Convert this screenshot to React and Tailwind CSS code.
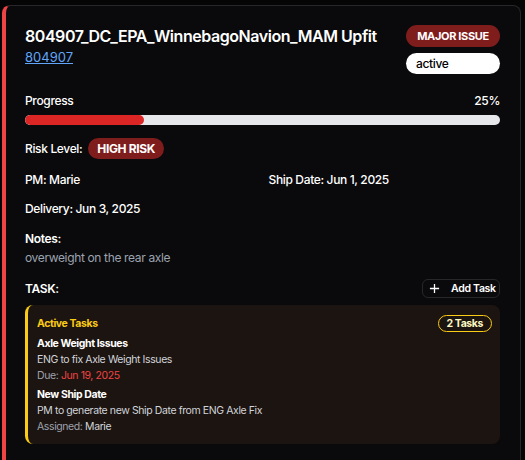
import React from "react";

export default function App() {
  return (
    <div className="min-h-[460px] bg-[#050505] pl-[2px] pt-[5px] overflow-hidden" style={{ fontFamily: "Inter, 'Noto Sans', sans-serif" }}>
      <div className="w-[519px] h-[470px] bg-[#0a0a0c] border border-[#27272a] border-l-4 border-l-[#ef4444] rounded-lg pl-[19px] pr-[20px] pt-[18px] tracking-[-0.35px]">
        <div className="flex justify-between items-start">
          <div className="flex flex-col">
            <div className="text-[16px] font-semibold text-white leading-[24px] tracking-[-0.45px] whitespace-nowrap">804907_DC_EPA_WinnebagoNavion_MAM Upfit</div>
            <a className="text-[13px] text-[#60a5fa] underline leading-[18px] tracking-[0px]">804907</a>
          </div>
          <div className="flex flex-col gap-[6px] w-[94px] mt-[1px]">
            <div className="h-[22px] rounded-full bg-[#7f1d1d] text-white text-[11px] font-bold flex items-center justify-center whitespace-nowrap">MAJOR ISSUE</div>
            <div className="h-[21px] rounded-full bg-white text-black text-[12px] font-medium flex items-center pl-[10px]">active</div>
          </div>
        </div>

        <div className="mt-[18px] flex justify-between text-[12px] font-medium text-white leading-[18px]">
          <span>Progress</span>
          <span>25%</span>
        </div>
        <div className="mt-[5px] h-[10px] rounded-full bg-[#e5e7eb] overflow-hidden">
          <div className="h-full bg-[#dc2626] rounded-full" style={{ width: "25%" }} />
        </div>

        <div className="mt-[13px] flex items-center gap-[6px]">
          <span className="text-[12px] font-medium text-white">Risk Level:</span>
          <span className="h-[21px] px-[9px] rounded-full bg-[#7f1d1d] text-white text-[12px] font-bold flex items-center">HIGH RISK</span>
        </div>

        <div className="mt-[11px] grid grid-cols-2 gap-x-3 text-[12px] font-medium text-white leading-[20px]">
          <span>PM: Marie</span>
          <span>Ship Date: Jun 1, 2025</span>
        </div>
        <div className="mt-[9px] text-[12px] font-medium text-white leading-[20px]">Delivery: Jun 3, 2025</div>

        <div className="mt-[10px] text-[12px] font-semibold text-white leading-[20px]">Notes:</div>
        <div className="text-[12px] text-[#9ca3af] leading-[18px]">overweight on the rear axle</div>

        <div className="mt-[12px] flex justify-between items-center">
          <span className="text-[12px] font-semibold text-white">TASK:</span>
          <button className="h-[19px] w-[78px] border border-[#27272a] rounded-md flex items-center gap-[11px] pl-[6px] text-white text-[10.5px] font-semibold whitespace-nowrap tracking-[-0.3px]">
            <svg width="11" height="11" viewBox="0 0 12 12" stroke="white" strokeWidth="1.4" fill="none"><path d="M6 1v10M1 6h10" /></svg>
            <span>Add Task</span>
          </button>
        </div>

        <div className="mt-[7px] bg-[#1c1410] border-l-[3px] border-l-[#facc15] rounded-lg pl-[9px] pr-[8px] pt-[10px] pb-[9px] tracking-[-0.4px]">
          <div className="flex justify-between items-center">
            <span className="text-[10.5px] font-bold text-[#facc15]">Active Tasks</span>
            <span className="h-[17px] px-[8px] border border-[#facc15] rounded-full text-[10.5px] font-bold text-[#fef9c3] flex items-center">2 Tasks</span>
          </div>
          <div className="mt-[4px] text-[10.5px] leading-[16px]">
            <div className="font-bold text-white">Axle Weight Issues</div>
            <div className="text-[#d1d5db]">ENG to fix Axle Weight Issues</div>
            <div className="text-[#9ca3af]">Due: <span className="text-[#ef4444]">Jun 19, 2025</span></div>
            <div className="mt-[3px] font-bold text-white">New Ship Date</div>
            <div className="text-[#d1d5db]">PM to generate new Ship Date from ENG Axle Fix</div>
            <div className="text-[#9ca3af]">Assigned: <span className="text-[#d1d5db]">Marie</span></div>
          </div>
        </div>
      </div>
    </div>
  );
}
